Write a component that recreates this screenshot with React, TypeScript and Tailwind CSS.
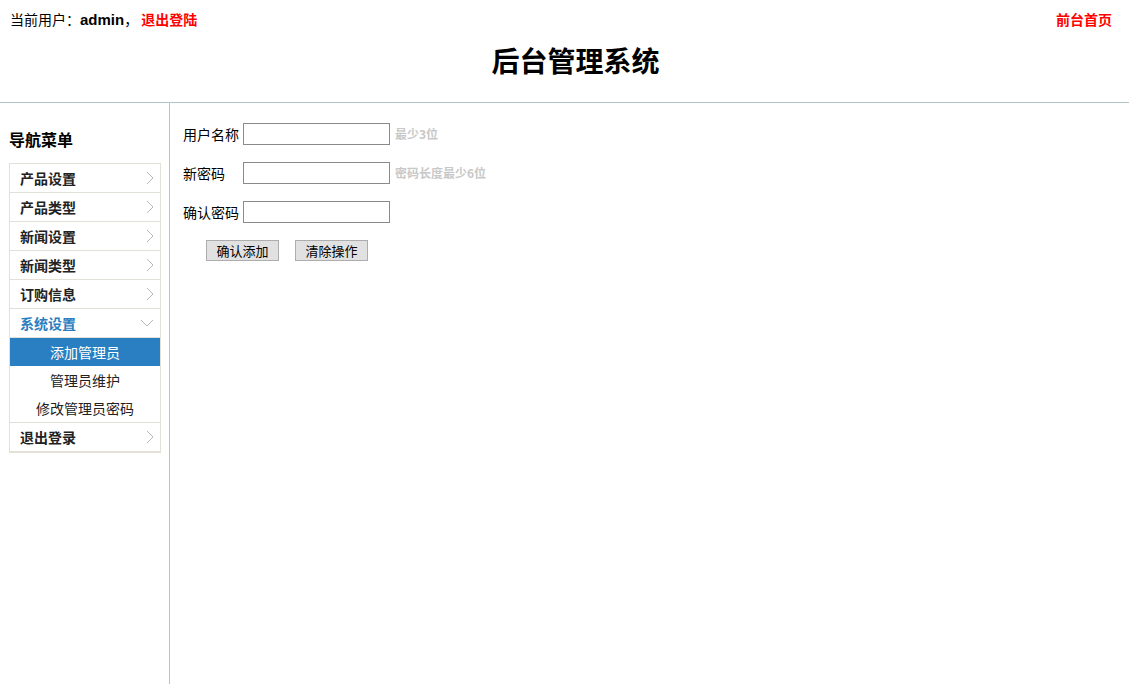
import React from "react";

const menu = ["产品设置", "产品类型", "新闻设置", "新闻类型", "订购信息"];
const subMenu = ["添加管理员", "管理员维护", "修改管理员密码"];

function ChevronRight() {
  return (
    <svg width="8" height="14" viewBox="0 0 8 14" fill="none">
      <path d="M1 1l6 6-6 6" stroke="#b8b8b8" strokeWidth="1" />
    </svg>
  );
}

function ChevronDown() {
  return (
    <svg width="14" height="8" viewBox="0 0 14 8" fill="none">
      <path d="M1 1l6 6 6-6" stroke="#b8b8b8" strokeWidth="1" />
    </svg>
  );
}

function MenuRow({ label, open }: { label: string; open?: boolean }) {
  return (
    <div className="flex items-center justify-between h-[29px] border-b border-[#e3e0d8] pl-[10px] pr-[6px]">
      <span className={`text-[14px] font-bold ${open ? "text-[#2a7dc0]" : "text-[#222]"}`}>
        {label}
      </span>
      {open ? <ChevronDown /> : <ChevronRight />}
    </div>
  );
}

function FormRow({ label, hint }: { label: string; hint?: string }) {
  return (
    <div className="flex items-center h-[22px]">
      <span className="w-[60px] text-[14px] text-black">{label}</span>
      <input className="w-[147px] h-[22px] border border-[#8a8a8a] bg-white outline-none" />
      {hint && <span className="ml-[5px] text-[12px] font-bold text-[#c8c8c8]">{hint}</span>}
    </div>
  );
}

export default function App() {
  return (
    <div className="min-h-[684px] bg-white font-['Noto_Sans_CJK_SC','Noto_Sans',sans-serif] text-black">
      <div className="h-[103px] border-b border-[#b2c6c6]">
        <div className="flex justify-between pl-[10px] pr-[17px] pt-[9px] text-[14px] leading-[20px]">
          <div>
            当前用户：<b className="font-['Liberation_Sans','Noto_Sans_CJK_SC',sans-serif] text-[15px]">admin</b>，
            <a className="ml-[3px] font-bold text-[#ff0000]">退出登陆</a>
          </div>
          <a className="font-bold text-[#ff0000]">前台首页</a>
        </div>
        <h1 className="mt-[10px] pl-[22px] text-center text-[28px] font-bold leading-[40px]">后台管理系统</h1>
      </div>
      <div className="flex h-[581px]">
        <div className="w-[170px] border-r border-[#b2c6c6] pl-[9px] pt-[24px]">
          <div className="text-[16px] font-bold leading-[24px]">导航菜单</div>
          <div className="mt-[12px] w-[152px] border border-b-2 border-[#e3e0d8]">
            {menu.map((m) => (
              <MenuRow key={m} label={m} />
            ))}
            <MenuRow label="系统设置" open />
            <div className="border-b border-[#e3e0d8]">
              {subMenu.map((s, i) => (
                <div
                  key={s}
                  className={`flex h-[28px] items-center justify-center text-[14px] ${
                    i === 0 ? "bg-[#2a7fc2] text-white" : "text-[#222]"
                  }`}
                >
                  {s}
                </div>
              ))}
            </div>
            <div className="flex items-center justify-between h-[28px] pl-[10px] pr-[6px]">
              <span className="text-[14px] font-bold text-[#222]">退出登录</span>
              <ChevronRight />
            </div>
          </div>
        </div>
        <div className="flex-1 pl-[13px] pt-[20px]">
          <div className="flex flex-col gap-[17px]">
            <FormRow label="用户名称" hint="最少3位" />
            <FormRow label="新密码" hint="密码长度最少6位" />
            <FormRow label="确认密码" />
          </div>
          <div className="mt-[17px] flex gap-[16px] pl-[23px]">
            <button className="h-[21px] w-[73px] border border-[#adadad] bg-[#e1e1e1] text-[13px] leading-none">确认添加</button>
            <button className="h-[21px] w-[73px] border border-[#adadad] bg-[#e1e1e1] text-[13px] leading-none">清除操作</button>
          </div>
        </div>
      </div>
    </div>
  );
}
